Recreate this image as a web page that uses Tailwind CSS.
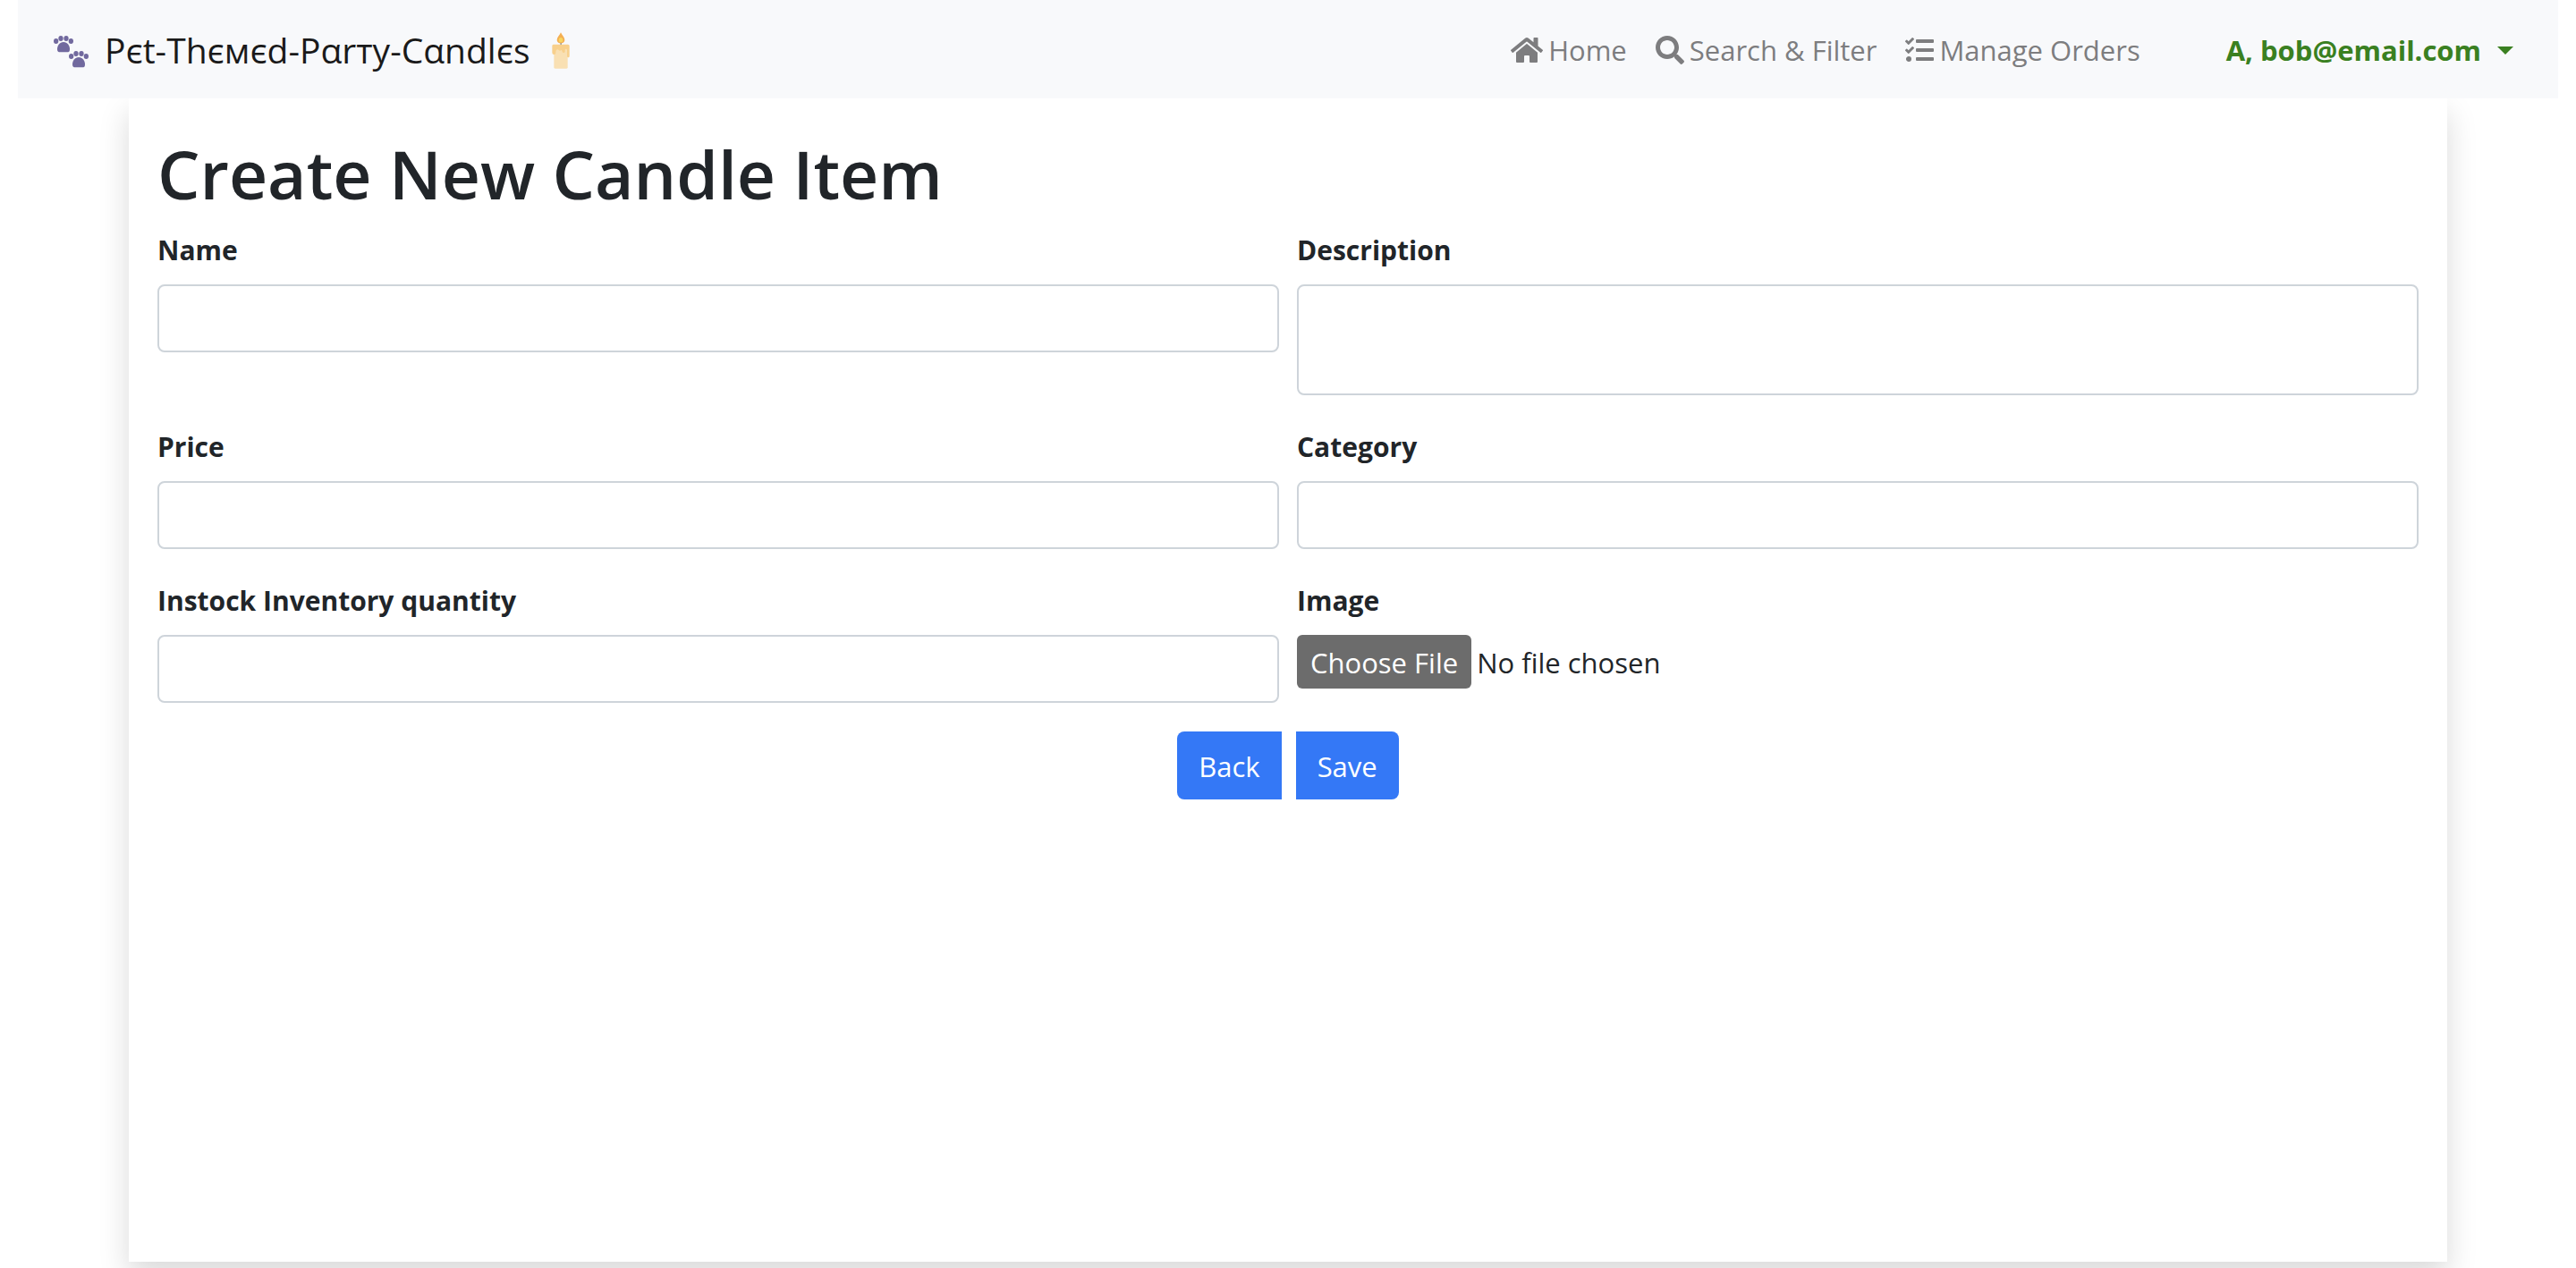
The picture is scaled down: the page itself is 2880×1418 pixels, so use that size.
<!DOCTYPE html>
<html lang="en">
<head>
<meta charset="utf-8">
<title>Create New Candle Item</title>
<script src="https://cdn.jsdelivr.net/npm/@tailwindcss/browser@4"></script>
</head>
<body class="flex min-h-screen flex-col bg-white font-['Open_Sans','Noto_Sans',sans-serif] text-[31px] leading-12 text-[#212529]">
  <nav class="z-10 mx-5 flex h-[110px] items-center justify-between bg-[#f8f9fb] pt-0.5 pr-[50px] pl-10">
    <a href="#" class="flex items-center text-[39px] text-[#1a1a1a]">
      <svg class="mt-1 mr-[18px] h-9 w-[39px]" viewBox="30 62 117 108" fill="#71699e" aria-hidden="true">
        <g id="paw">
          <ellipse cx="38" cy="80" rx="8" ry="9"/><ellipse cx="54" cy="71" rx="8" ry="9"/><ellipse cx="72" cy="71" rx="8" ry="9"/><ellipse cx="88" cy="80" rx="8" ry="9"/>
          <path d="M63 83C50 83 42 95 42 107C42 115 46 117 52 117H75C81 117 84 115 84 107C84 95 76 83 63 83Z"/>
        </g>
        <use href="#paw" x="51" y="51"/>
      </svg>
      <span>Pєt-Thємєd-Pαrтy-Cαndlєs</span>
      <svg class="ml-6 h-[41px] w-5" viewBox="53 46 60 123" aria-hidden="true">
        <path d="M81 80h5v12h-5z" fill="#9a9a9a"/>
        <path d="M60 92H106V164Q106 168 102 168H64Q60 168 60 164Z" fill="#f9e0b3"/>
        <path d="M58 87H107Q112 87 112 92V126Q112 131 108 131Q104 131 104 126V106Q104 102 100 102Q97 102 97 106V111Q97 115 92 115Q88 115 87 109Q86 105 83 107Q80 110 76 106Q72 102 68 106Q66 108 66 113V116Q66 121 60 121Q54 121 54 115V92Q54 87 58 87Z" fill="#f8d08c"/>
        <path d="M83 47C87 56 96 64 96 72C96 79 90 83 83 83C76 83 70 79 70 72C70 64 79 56 83 47Z" fill="#f4af52"/>
        <ellipse cx="83" cy="72" rx="7" ry="8" fill="#f7d560"/>
      </svg>
    </a>
    <div class="flex items-center text-[#7d7d7f]">
      <a href="#" class="flex items-center gap-1.5 px-4">
        <svg class="h-8 w-9" viewBox="0 0 576 512" fill="currentColor" aria-hidden="true"><path d="M280.37 148.26L96 300.11V464a16 16 0 0 0 16 16l112.06-.29a16 16 0 0 0 15.92-16V368a16 16 0 0 1 16-16h64a16 16 0 0 1 16 16v95.64a16 16 0 0 0 16 16.05L464 480a16 16 0 0 0 16-16V300L295.67 148.26a12.19 12.19 0 0 0-15.3 0zM571.6 251.47L488 182.56V44.05a12 12 0 0 0-12-12h-56a12 12 0 0 0-12 12v72.61L318.47 43a48 48 0 0 0-61 0L4.34 251.47a12 12 0 0 0-1.6 16.9l25.5 31A12 12 0 0 0 45.15 301l235.22-193.74a12.19 12.19 0 0 1 15.3 0L530.9 301a12 12 0 0 0 16.9-1.6l25.5-31a12 12 0 0 0-1.7-16.93z"/></svg>
        Home
      </a>
      <a href="#" class="flex items-center gap-1.5 px-4">
        <svg class="size-8" viewBox="0 0 512 512" fill="currentColor" aria-hidden="true"><path d="M505 442.7L405.3 343c-4.500-4.500-10.600-7-17-7H372c27.600-35.300 44-79.700 44-128C416 93.100 322.900 0 208 0S0 93.100 0 208s93.100 208 208 208c48.300 0 92.700-16.400 128-44v16.300c0 6.400 2.500 12.500 7 17l99.700 99.700c9.400 9.400 24.600 9.400 33.900 0l28.300-28.300c9.400-9.400 9.400-24.600.1-34zM208 336c-70.700 0-128-57.200-128-128 0-70.700 57.200-128 128-128 70.700 0 128 57.200 128 128 0 70.700-57.200 128-128 128z"/></svg>
        Search &amp; Filter
      </a>
      <a href="#" class="flex items-center gap-1.5 px-4">
        <svg class="size-8" viewBox="0 0 512 512" fill="currentColor" aria-hidden="true"><path d="M139.610 35.500a12 12 0 0 0-17 0L58.930 98.810l-22.700-22.120a12 12 0 0 0-17 0L3.530 92.410a12 12 0 0 0 0 17l47.590 47.400a12.780 12.780 0 0 0 17.610 0l15.590-15.620L156.520 69a12.090 12.090 0 0 0 .09-17zm0 159.190a12 12 0 0 0-17 0l-63.680 63.720-22.700-22.100a12 12 0 0 0-17 0L3.530 252a12 12 0 0 0 0 17L51 316.500a12.770 12.770 0 0 0 17.600 0l15.700-15.690 72.200-72.220a12 12 0 0 0 .09-16.900zM64 368c-26.490 0-48.590 21.500-48.590 48S37.530 464 64 464a48 48 0 0 0 0-96zm432 16H208a16 16 0 0 0-16 16v32a16 16 0 0 0 16 16h288a16 16 0 0 0 16-16v-32a16 16 0 0 0-16-16zm0-320H208a16 16 0 0 0-16 16v32a16 16 0 0 0 16 16h288a16 16 0 0 0 16-16V80a16 16 0 0 0-16-16zm0 160H208a16 16 0 0 0-16 16v32a16 16 0 0 0 16 16h288a16 16 0 0 0 16-16v-32a16 16 0 0 0-16-16z"/></svg>
        Manage Orders
      </a>
      <button type="button" class="ml-20 flex items-center gap-[18px] font-bold text-[#3a8021]">
        A, bob@email.com
        <svg class="h-[9px] w-[18px]" viewBox="0 0 18 9" fill="currentColor" aria-hidden="true"><path d="M0 0H18L9 9Z"/></svg>
      </button>
    </div>
  </nav>

  <main class="mx-auto mb-[7px] w-9/10 flex-1 bg-white px-8 pt-9 pb-8 shadow-[0_16px_32px_rgba(0,0,0,0.15)]">
    <h1 class="mb-3 text-[75px] leading-24 font-semibold">Create New Candle Item</h1>
    <form class="grid grid-cols-2 items-start gap-x-5 gap-y-8">
      <div>
        <label for="name" class="block pt-0.5 pb-3.5 text-[30px] font-bold">Name</label>
        <input id="name" type="text" class="block h-19 w-full rounded-lg border-2 border-[#ced4da] bg-white px-6">
      </div>
      <div>
        <label for="description" class="block pt-0.5 pb-3.5 text-[30px] font-bold">Description</label>
        <textarea id="description" class="block h-31 w-full resize-none rounded-lg border-2 border-[#ced4da] bg-white px-6 py-3"></textarea>
      </div>
      <div>
        <label for="price" class="block pt-0.5 pb-3.5 text-[30px] font-bold">Price</label>
        <input id="price" type="text" class="block h-19 w-full rounded-lg border-2 border-[#ced4da] bg-white px-6">
      </div>
      <div>
        <label for="category" class="block pt-0.5 pb-3.5 text-[30px] font-bold">Category</label>
        <input id="category" type="text" class="block h-19 w-full rounded-lg border-2 border-[#ced4da] bg-white px-6">
      </div>
      <div>
        <label for="quantity" class="block pt-0.5 pb-3.5 text-[30px] font-bold">Instock Inventory quantity</label>
        <input id="quantity" type="text" class="block h-19 w-full rounded-lg border-2 border-[#ced4da] bg-white px-6">
      </div>
      <div>
        <label for="image" class="block pt-0.5 pb-3.5 text-[30px] font-bold">Image</label>
        <input id="image" type="file" class="block w-full file:mr-1.5 file:h-15 file:rounded-md file:bg-[#6c6c6c] file:px-[15px] file:pt-0.5 file:text-white">
      </div>
      <div class="col-span-2 flex justify-center gap-4">
        <button type="button" class="h-19 rounded-l-lg bg-[#3478f6] px-6 pt-0.5 text-white">Back</button>
        <button type="submit" class="h-19 rounded-r-lg bg-[#3478f6] px-6 pt-0.5 text-white">Save</button>
      </div>
    </form>
  </main>
</body>
</html>
